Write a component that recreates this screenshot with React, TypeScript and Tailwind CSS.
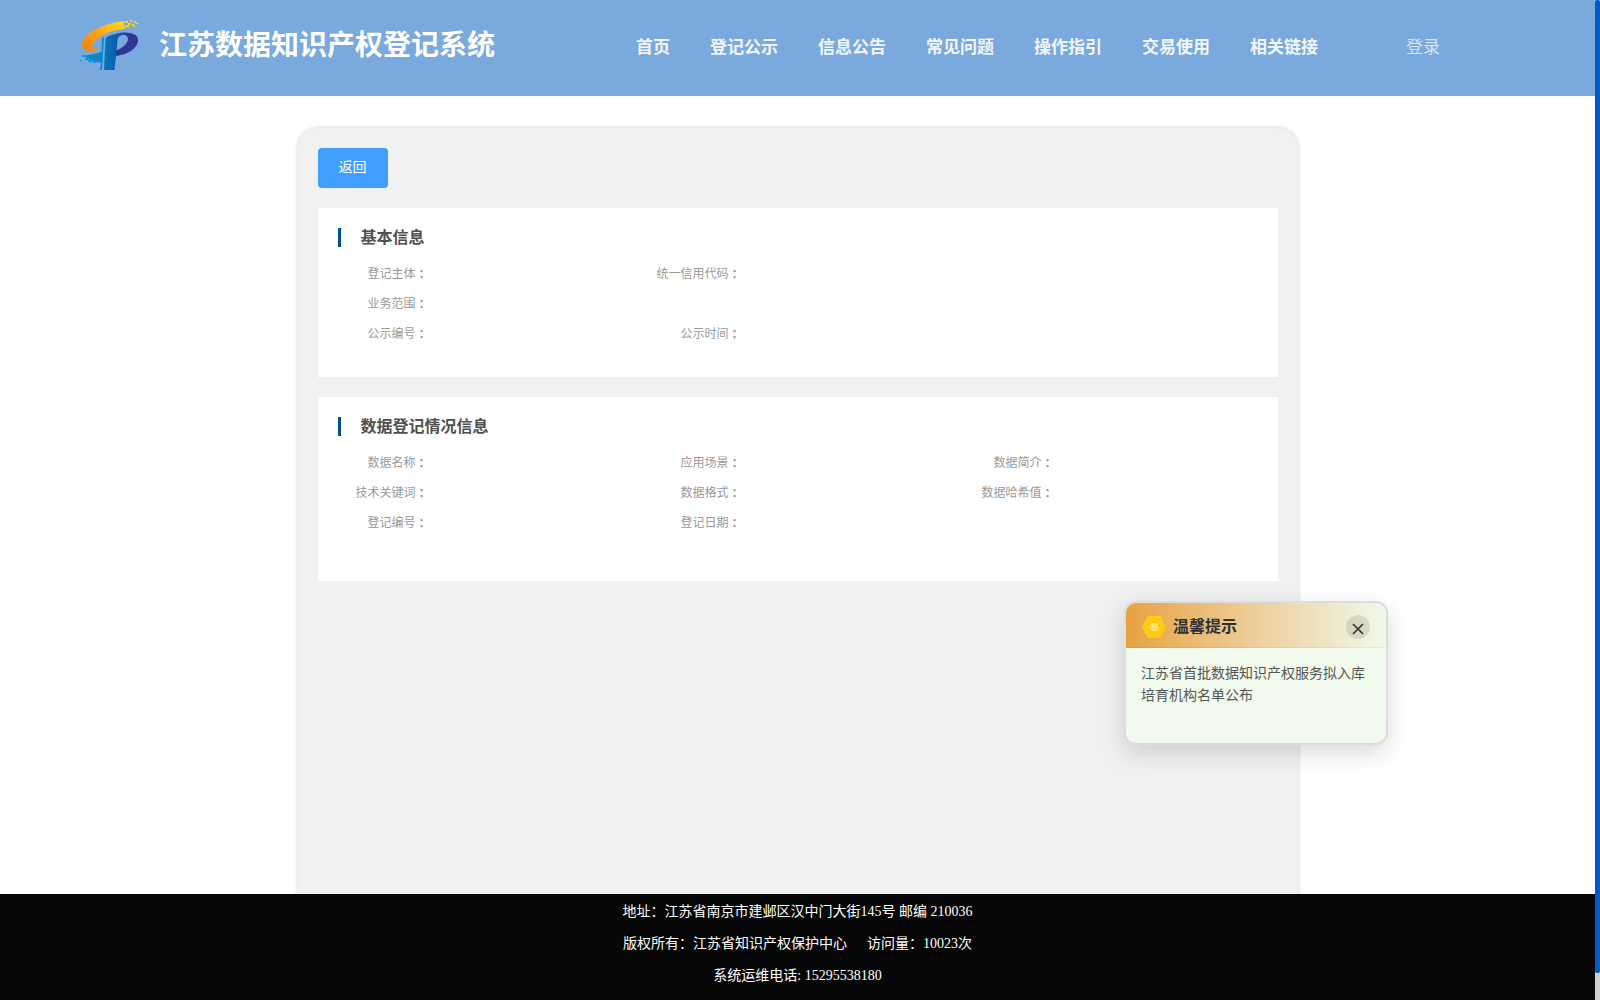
import React from 'react';

const navItems = ['首页', '登记公示', '信息公告', '常见问题', '操作指引', '交易使用', '相关链接'];

// null leaves a grid cell empty
const basicFields = ['登记主体', '统一信用代码', null, '业务范围', null, null, '公示编号', '公示时间'];
const dataFields = ['数据名称', '应用场景', '数据简介', '技术关键词', '数据格式', '数据哈希值', '登记编号', '登记日期'];

const Logo: React.FC = () => (
  <svg viewBox="0 0 60 52" className="w-[60px] h-[52px] shrink-0">
    <defs>
      <linearGradient id="arc" x1="0" y1="1" x2="1" y2="0">
        <stop offset="0" stopColor="#f07f09" />
        <stop offset="0.5" stopColor="#fba51a" />
        <stop offset="1" stopColor="#fcdc1c" />
      </linearGradient>
      <linearGradient id="stem" x1="0" y1="0" x2="1" y2="0">
        <stop offset="0" stopColor="#0a76bf" />
        <stop offset="0.55" stopColor="#0a5dac" />
        <stop offset="1" stopColor="#24409a" />
      </linearGradient>
    </defs>
    <path d="M44 2C24 4 3 14 2 25C2 31 9 34 21 32.5C14 31 11 28 13 25C17 18 31 11 44 10L46 8L44 6Z" fill="url(#arc)" />
    <path d="M37 14.5C49 12 58 15 58 21C58 29 48 36 35 37V32C43 29 48 24 48 20C48 16 43 14.5 37 15Z" fill="#2e3794" />
    <path d="M25.5 19C31 15 38 14 47 15.5C41 15.5 38 17 37.5 21L36 37L34.5 51H24Z" fill="url(#stem)" />
    <path d="M22 19L24 18L22 51H20L21 43.5C13 43.5 7 40 4 36.5C10 36 17 34.5 21.5 32.5Z" fill="#0f85ca" />
    <g fill="#f6d321">
      <path d="M45 2h3v2h-3zM50 1h2v2h-2zM48 4h3v2h-3zM54 2h2v2h-2zM56 4h3v1h-3zM46 6h3v2h-3zM52 5h2v2h-2zM54 7h2v1h-2z" />
    </g>
    <g fill="#159ad9">
      <path d="M2 36h3v2h-3zM5 39h3v2h-3zM0 41h2v1h-2zM8 41h3v2h-3zM10 43h2v1h-2zM13 42h3v2h-3z" />
    </g>
  </svg>
);

interface SectionProps {
  title: string;
  fields: (string | null)[];
  className: string;
}

const Section: React.FC<SectionProps> = ({ title, fields, className }) => (
  <section className={`bg-white px-5 pt-5 ${className}`}>
    <h2 className="h-[19px] border-l-[3px] border-[#00508e] pl-5 text-base leading-[19px] font-bold text-[#505050]">
      {title}
    </h2>
    <div className="mt-3 grid w-[939px] grid-cols-3 text-xs leading-[30px] text-[#999]">
      {fields.map((field, i) => (
        <div key={i} className="h-[30px]">
          {field && (
            <div className="flex w-[90px] justify-end whitespace-nowrap">
              {field}
              <span className="font-['Noto_Sans_CJK_TC',sans-serif] font-bold">：</span>
            </div>
          )}
        </div>
      ))}
    </div>
  </section>
);

const Notice: React.FC = () => (
  <aside className="absolute left-[1124px] top-[601px] h-[144px] w-[264px] overflow-hidden rounded-xl border-2 border-[#dcdddc] bg-[#f0f9eb] shadow-[0_8px_24px_rgba(0,0,0,0.15)]">
    <div className="flex h-[45px] items-center border-b border-black/5 bg-linear-to-r from-[#e6a23c] to-[#f0f9eb] px-4 pt-[3px]">
      <svg viewBox="0 0 24 22" className="h-[22px] w-6">
        <path d="M5.5 0H18.5L24 11L18.5 22H5.5L0 11Z" fill="#ffca15" />
        <g fill="none" stroke="#ffeb9b" strokeWidth="1.2">
          <circle cx="12" cy="11" r="3.4" />
          <path d="M10.5 9.5h3v2h-3zM12 11.5v3" />
        </g>
      </svg>
      <h3 className="ml-[7px] pt-px text-base leading-6 font-bold text-[#303133]">温馨提示</h3>
      <button className="ml-auto flex size-6 items-center justify-center rounded-full bg-black/10">
        <svg viewBox="0 0 12 12" className="relative top-[2px] size-3" stroke="#333" strokeWidth="1.7">
          <path d="M1 1L11 11M11 1L1 11" />
        </svg>
      </button>
    </div>
    <p className="-ml-px pl-4 pr-[17px] pt-[15px] text-sm leading-[22px] text-[#555]">
      江苏省首批数据知识产权服务拟入库培育机构名单公布
    </p>
  </aside>
);

const App: React.FC = () => {
  return (
    <div className="relative flex h-[1000px] w-[1600px] overflow-hidden bg-white font-['Liberation_Serif','Noto_Sans_CJK_SC',serif]">
      <div className="flex w-[1595px] flex-col">
        <header className="flex h-24 shrink-0 items-start bg-[#79a9dd] text-white">
          <div className="flex w-[636px] pl-20">
            <div className="pt-[19px]">
              <Logo />
            </div>
            <h1 className="ml-[19px] pt-[26px] text-[28px] leading-10 font-bold whitespace-nowrap">江苏数据知识产权登记系统</h1>
          </div>
          <nav className="flex gap-10 pt-9 text-[17px] leading-6 font-bold text-white/90">
            {navItems.map((item) => (
              <a key={item} className="whitespace-nowrap">{item}</a>
            ))}
          </nav>
          <a className="ml-[88px] pt-9 text-[17px] leading-6 text-white/70">登录</a>
        </header>

        <main className="min-h-0 flex-1 overflow-hidden pt-8">
          <div className="mx-auto h-[900px] w-[1000px] rounded-[20px] bg-[#f1f1f1] p-5 shadow-[0_0_4px_rgba(0,0,0,0.2)]">
            <button className="block h-10 w-[70px] rounded bg-[#409eff] text-sm leading-10 text-white">返回</button>
            <Section title="基本信息" fields={basicFields} className="mt-5 h-[169px]" />
            <Section title="数据登记情况信息" fields={dataFields} className="mt-5 h-[184px]" />
          </div>
        </main>

        <footer className="h-[106px] shrink-0 bg-[#070707] pt-[2px] text-center text-sm leading-8 text-white">
          <p>地址：江苏省南京市建邺区汉中门大街145号 邮编 210036</p>
          <p>
            版权所有：江苏省知识产权保护中心<span className="ml-5">访问量：10023次</span>
          </p>
          <p>系统运维电话: 15295538180</p>
        </footer>
      </div>

      {/* Scrollbar */}
      <div className="w-[5px] bg-[#cecece]">
        <div className="h-[973px] rounded-[2px] bg-[#005ac4]" />
      </div>

      <Notice />
    </div>
  );
};

export default App;
